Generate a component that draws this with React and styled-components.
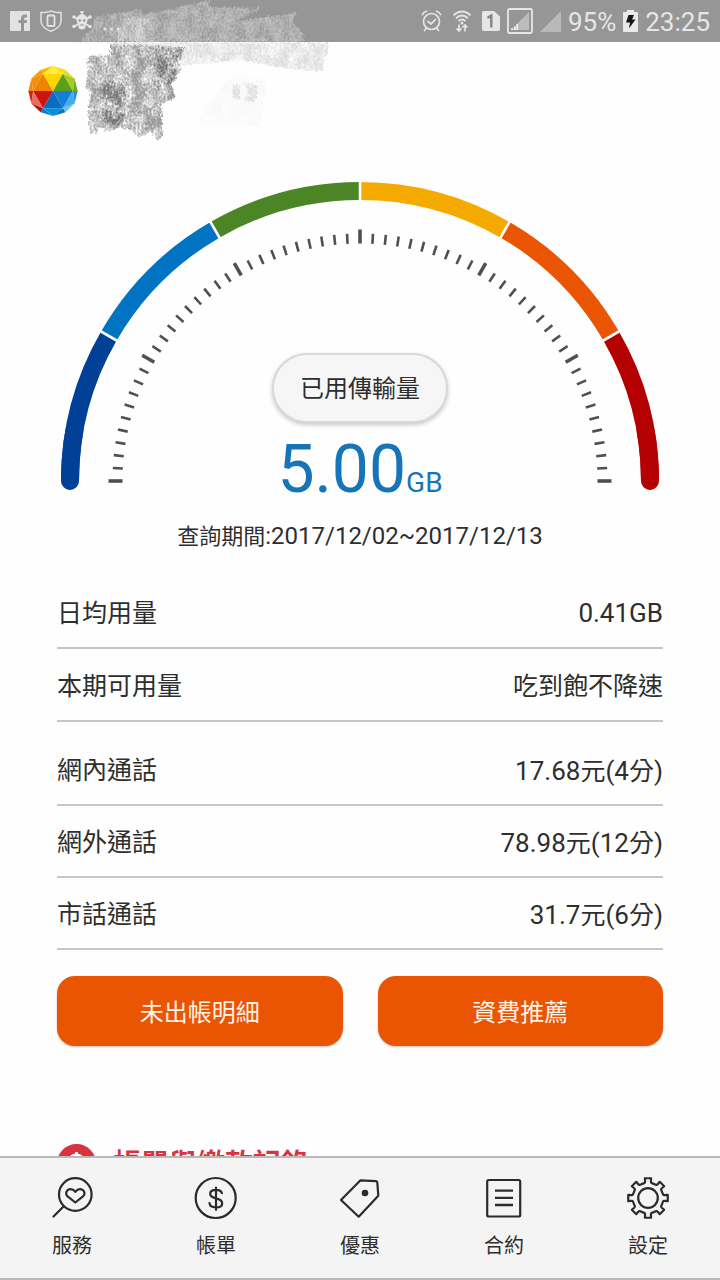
import React from "react";
import styled, { createGlobalStyle } from "styled-components";

const GlobalStyle = createGlobalStyle`
  *, *::before, *::after { box-sizing: border-box; }
  body {
    margin: 0;
    background: #fefefe;
    color: #2e2e2e;
    font-family: Roboto, "Noto Sans CJK TC", sans-serif;
  }
  button, a { font: inherit; color: inherit; }
`;

const Screen = styled.div`
  position: relative;
  display: flex;
  flex-direction: column;
  height: 100vh;
  overflow: hidden;
`;

const StatusBar = styled.div`
  flex: none;
  display: flex;
  align-items: center;
  justify-content: space-between;
  height: 42px;
  padding: 0 10px;
  background: #969696;
  color: #e6e6e6;
  font-size: 26px;
  line-height: 32px;
`;

const StatusGroup = styled.div`
  display: flex;
  align-items: center;
  gap: ${(p) => p.$gap}px;
`;

const Clock = styled.span`
  padding-top: 2px;
`;

const Scroller = styled.main`
  flex: 1;
  min-height: 0;
  overflow-y: auto;
  scrollbar-width: none;
`;

const Header = styled.header`
  display: flex;
  align-items: center;
  height: 98px;
  padding: 0 28px;
`;

const Content = styled.div`
  padding: 38px 57px 0;
`;

const GaugeFrame = styled.section`
  display: grid;
  justify-items: center;
  align-items: start;
  > * { grid-area: 1 / 1; }
`;

const GaugeSvg = styled.svg`
  display: block;
  width: 100%;
  max-width: 606px;
`;

const Reading = styled.div`
  display: flex;
  flex-direction: column;
  align-items: center;
  padding-top: 175px;
`;

const Pill = styled.button`
  height: 70px;
  padding: 2px 26px 0;
  border: 2px solid #d9d9d9;
  border-radius: 35px;
  background: #f6f6f6;
  box-shadow: 0 2px 4px rgba(0, 0, 0, 0.22);
  font-size: 24px;
  line-height: 36px;
`;

const Amount = styled.p`
  margin: 9px 0 0;
  color: #1674b8;
  font-size: 66px;
  line-height: 76px;
`;

const Unit = styled.span`
  font-size: 28px;
`;

const Period = styled.p`
  margin: 0;
  text-align: center;
  font-size: 22px;
  line-height: 30px;
`;

const Latin = styled.span`
  font-size: ${(p) => p.$size}px;
`;

const List = styled.dl`
  margin: ${(p) => p.$top}px 0 0;
`;

const Row = styled.div`
  display: flex;
  align-items: center;
  justify-content: space-between;
  height: ${(p) => p.$height}px;
  padding-top: 4px;
  border-bottom: 2px solid #c6c6c8;
  font-size: 25px;
  line-height: 36px;
  dd { margin: 0; }
`;

const Actions = styled.div`
  display: grid;
  grid-template-columns: 1fr 1fr;
  gap: 35px;
  margin-top: 26px;
`;

const ActionButton = styled.button`
  height: 70px;
  padding: 4px 0 0;
  border: 0;
  border-radius: 18px;
  background: #ea5504;
  box-shadow: 0 1px 2px rgba(0, 0, 0, 0.25);
  && { color: #fff3e6; }
  font-size: 24px;
  line-height: 36px;
`;

const SectionTitle = styled.h2`
  display: flex;
  align-items: center;
  gap: 17px;
  margin: 95px 0 24px;
  color: #d9333f;
  font-size: 28px;
  line-height: 40px;
`;

const TitleText = styled.span`
  padding-top: 4px;
`;

const NavBar = styled.nav`
  flex: none;
  display: grid;
  grid-template-columns: repeat(5, 1fr);
  height: 124px;
  border-top: 2px solid #b9b9b9;
  border-bottom: 2px solid #b9b9b9;
  background: #f4f4f4;
`;

const NavLink = styled.a`
  display: flex;
  flex-direction: column;
  align-items: center;
  gap: 11px;
  padding-top: 18px;
  text-decoration: none;
  font-size: 20px;
  line-height: 30px;
`;

const NavSvg = styled.svg`
  display: block;
  width: 44px;
  height: 44px;
  fill: none;
  stroke: #2b2b2b;
  stroke-width: 2.2;
  stroke-linecap: round;
  stroke-linejoin: round;
`;

const ScribbleSvg = styled.svg`
  position: absolute;
  top: 0;
  left: 0;
  width: 340px;
  height: 150px;
  pointer-events: none;
`;

const polar = (r, deg, cx = 303, cy = 303) => {
  const a = (deg * Math.PI) / 180;
  return [cx - r * Math.cos(a), cy - r * Math.sin(a)];
};

const SEGMENTS = ["#004097", "#0074c2", "#4b8526", "#f5aa00", "#ea5504", "#b40000"];

function arc(from, to) {
  const [x1, y1] = polar(290, from);
  const [x2, y2] = polar(290, to);
  return `M${x1} ${y1}A290 290 0 0 1 ${x2} ${y2}`;
}

function Gauge() {
  return (
    <GaugeSvg viewBox="0 0 606 313" aria-hidden="true">
      <g fill="none" strokeWidth="18">
        <path d={arc(0, 10)} stroke={SEGMENTS[0]} strokeLinecap="round" />
        <path d={arc(170, 180)} stroke={SEGMENTS[5]} strokeLinecap="round" />
        {SEGMENTS.map((color, i) => (
          <path key={color} d={arc(i * 30, i * 30 + 30)} stroke={color} />
        ))}
      </g>
      {[30, 60, 90, 120, 150].map((deg) => {
        const [x1, y1] = polar(278, deg);
        const [x2, y2] = polar(302, deg);
        return <line key={deg} x1={x1} y1={y1} x2={x2} y2={y2} stroke="#fff" strokeWidth="2.6" />;
      })}
      {Array.from({ length: 61 }, (_, i) => {
        const major = i % 10 === 0;
        const [x1, y1] = polar(237.5, i * 3);
        const [x2, y2] = polar(major ? 251.5 : 247.5, i * 3);
        return (
          <line key={i} x1={x1} y1={y1} x2={x2} y2={y2} stroke="#505050" strokeWidth={major ? 3.6 : 2.6} />
        );
      })}
    </GaugeSvg>
  );
}

function Logo() {
  const ring = (r, offset) =>
    Array.from({ length: 6 }, (_, i) => polar(r, i * 60 + offset, 74, 74));
  const inner = ring(59, 0);
  const mid = ring(74, 30);
  const outer = ring(73, 0);
  const facets = ["#f08200", "#ffd500", "#58a01c", "#1480d2", "#0a6cc0", "#cc130d"];
  const caps = ["#f28e10", "#ffec3c", "#a4cc22", "#45abea", "#0090dc", "#e8705a"];
  const rimA = ["#f08a14", "#f8b800", "#e4dc20", "#2a90d8", "#0a70c4", "#a81410"];
  const rimB = ["#f5a000", "#ffdd00", "#6cae1c", "#6cc0f0", "#0a80d0", "#d22018"];
  const pts = (...a) => a.map((p) => p.join(",")).join(" ");
  return (
    <svg width="50" height="50" viewBox="0 0 148 148" role="img" aria-label="logo">
      {inner.map((p, i) => {
        const n = (i + 1) % 6;
        return (
          <g key={i}>
            <polygon points={pts([74, 74], p, inner[n])} fill={facets[i]} />
            <polygon points={pts(p, mid[i], inner[n])} fill={caps[i]} />
            <polygon points={pts(p, outer[i], mid[i])} fill={rimA[i]} />
            <polygon points={pts(inner[n], outer[n], mid[i])} fill={rimB[i]} />
          </g>
        );
      })}
    </svg>
  );
}

function Scribble() {
  return (
    <ScribbleSvg viewBox="0 0 340 150" aria-hidden="true">
      <defs>
        <filter id="grain" x="-5%" y="-5%" width="110%" height="110%">
          <feTurbulence type="fractalNoise" baseFrequency="0.5 0.36" numOctaves="2" seed="4" result="n" />
          <feTurbulence type="fractalNoise" baseFrequency="0.09 0.07" numOctaves="2" seed="9" result="big" />
          <feComposite in="n" in2="big" operator="arithmetic" k2="0.6" k3="0.5" result="mix" />
          <feColorMatrix in="mix" type="matrix" values="0 0 0 0 0  0 0 0 0 0  0 0 0 0 0  0 0 0 2.6 -0.8" result="m" />
          <feDisplacementMap in="SourceGraphic" in2="n" scale="6" xChannelSelector="R" yChannelSelector="G" result="d" />
          <feComposite in="d" in2="m" operator="in" />
        </filter>
      </defs>
      <g filter="url(#grain)">
        <path d="M96 17 142 9 142 15 211 0 208 7 262 8 236 21 297 13 292 22 303 33 304 42 80 42 92 28z" fill="#d0d0d0" opacity="0.7" />
        <path d="M118 18H154V42H118z" fill="#e2e2e2" opacity="0.6" />
        <path d="M110 43 328 43 329 53 324 58 323 71 290 69 240 60 181 66 110 60z" fill="#c8c8c8" opacity="0.6" />
        <path d="M88 56 110 55 110 44 184 47 183 57 178 62 182 70 174 76 171 85 176 98 161 104 163 136 157 141 151 131 139 138 132 130 120 127 108 132 100 127 97 132 90 134 88 110 91 92 86 88z" fill="#999" />
        <path d="M102 84 120 80 128 96 122 126 104 122zM153 48 183 49 177 64 176 80 158 90z" fill="#5c5c5c" opacity="0.6" />
        <path d="M243 82 256 84 258 94 254 102 244 101 248 92zM232 86 240 83 240 100 233 99z" fill="#bdbdbd" opacity="0.55" />
        <path d="M196 122 228 78 262 78 266 88 260 126z" fill="#d8d8d8" opacity="0.16" />
      </g>
    </ScribbleSvg>
  );
}

const StatusLeft = () => (
  <StatusGroup $gap={10}>
    <svg width="20" height="20" viewBox="0 0 20 20">
      <rect width="20" height="20" rx="1" fill="#e2e2e2" />
      <path d="M11 20V12H8.500V9H11V7.500Q11 3.500 14.800 3.500H17V6.500H15.300Q14 6.500 14 8V9H17L16.600 12H14V20z" fill="#969696" />
    </svg>
    <svg width="22" height="22" viewBox="0 0 22 22" fill="none" stroke="#e2e2e2">
      <path d="M1 2.500H5Q9 2 11 .8 13 2 17 2.500H21V12Q20 18 11 21.300 2 18 1 12z" strokeWidth="1.500" />
      <rect x="7.500" y="5.500" width="7" height="10.500" rx="1" strokeWidth="1.800" />
    </svg>
    <svg width="20" height="20" viewBox="0 0 20 20" fill="#e6e6e6" stroke="#e6e6e6">
      <path d="M3 6.500 17 15M17 6.500 3 15" strokeWidth="2" strokeLinecap="round" />
      <circle cx="2" cy="6" r="1.800" stroke="none" /><circle cx="18" cy="6" r="1.800" stroke="none" />
      <circle cx="2" cy="15.500" r="1.800" stroke="none" /><circle cx="18" cy="15.500" r="1.800" stroke="none" />
      <path d="M10 .5V4M8 1H12" strokeWidth="1.500" />
      <path d="M10 3Q15.500 4 15.500 9 15.500 12 13.500 13V17Q10 20 6.500 17V13Q4.500 12 4.500 9 4.500 4 10 3z" stroke="none" />
      <circle cx="7.800" cy="9.500" r="1.300" fill="#969696" stroke="none" /><circle cx="12.200" cy="9.500" r="1.300" fill="#969696" stroke="none" />
      <path d="M8 14H12" stroke="#969696" />
    </svg>
    <svg width="18" height="20" viewBox="0 0 18 20" fill="#f0f0f0">
      <circle cx="3" cy="18" r="1.600" /><circle cx="9.500" cy="18" r="1.600" /><circle cx="16" cy="18" r="1.600" />
    </svg>
  </StatusGroup>
);

const StatusRight = () => (
  <StatusGroup $gap={7}>
    <svg width="21" height="22" viewBox="0 0 21 22" fill="none" stroke="#e6e6e6" strokeWidth="1.700" strokeLinecap="round">
      <circle cx="10.500" cy="11.500" r="8" />
      <path d="M7 11.500 10 14 14.500 9.500M1.500 4.500Q2.500 2 5.500 1.200M19.500 4.500Q18.500 2 15.500 1.200M5 18.500 3.500 20.500M16 18.500 17.500 20.500" />
    </svg>
    <svg width="26" height="24" viewBox="-2 0 26 24" fill="none" stroke="#e6e6e6" strokeWidth="1.900">
      <path d="M2.500 6.200Q11-1 19.500 6.200M5 9.200Q11 4 17 9.200M7.500 12Q11 9 14.500 12" />
      <circle cx="11" cy="14" r="1.500" fill="#e6e6e6" stroke="none" />
      <path d="M8 15.500V22M5.500 19.500 8 22 10.500 19.500M14 22.500V16M11.500 18.500 14 16 16.500 18.500" strokeWidth="1.700" />
    </svg>
    <svg width="18" height="20" viewBox="0 0 18 20">
      <path d="M2 0H12L18 5.500V18Q18 20 16 20H2Q0 20 0 18V2Q0 0 2 0z" fill="#e6e6e6" />
      <path d="M5.500 7 9.300 4.500V16.500" fill="none" stroke="#858585" strokeWidth="2.400" />
    </svg>
    <svg width="26" height="26" viewBox="0 0 26 26">
      <rect x="1" y="1" width="24" height="24" rx="1.500" fill="none" stroke="#e6e6e6" strokeWidth="1.800" />
      <path d="M4 22 22 4V22z" fill="#bcbcbc" />
      <path d="M4 22V20.500H6V22zM7 22V18.500H8.600V22zM9.500 22V16H11V22z" fill="#f4f4f4" />
    </svg>
    <svg width="21" height="22" viewBox="0 0 21 22"><path d="M0 22 21 1V22z" fill="#b9b9b9" /></svg>
    <Clock>95%</Clock>
    <svg width="15" height="22" viewBox="0 0 15 22">
      <path d="M4 0H11V2H14Q15 2 15 3V21Q15 22 14 22H1Q0 22 0 21V3Q0 2 1 2H4z" fill="#e9e9e9" />
      <path d="M5.500 5H11L9 9.500H12.500L6 18.500 7 12.500H3z" fill="#151515" />
    </svg>
    <Clock>23:25</Clock>
  </StatusGroup>
);

function gearPath() {
  const out = [];
  for (let i = 0; i < 8; i++) {
    [[15.5, -12.5], [16.5, -10], [20, -9], [20, 9], [16.5, 10], [15.5, 12.5]].forEach(([r, d]) => {
      out.push(polar(r, i * 45 + d, 22, 22).join(" "));
    });
  }
  return `M${out.join("L")}z`;
}

const NAV = [
  {
    label: "服務",
    icon: (
      <>
        <circle cx="25.300" cy="18.500" r="16.300" />
        <path d="M13.500 30.500 3.500 40.500M25.300 26.500 17.300 20.200Q15 17 17.300 14.400 21.500 11.400 25.300 15.800 29 11.400 33.300 14.400 35.700 17 33.300 20.200z" />
      </>
    ),
  },
  {
    label: "帳單",
    icon: (
      <>
        <circle cx="21.700" cy="22" r="20" />
        <path d="M28 17.200Q27 13.800 22 13.800 16.200 13.800 16.200 17.800 16.200 21 22 22.400 28.200 23.800 28.200 27.400 28.200 31.400 22 31.400 16 31.400 15.500 27.200M22 11.500V33.800" />
      </>
    ),
  },
  {
    label: "優惠",
    icon: (
      <>
        <path d="M3 24 22.500 4.300 38 5.200Q39.200 5.300 39.300 6.500L40.300 19.700 20.700 40.700z" />
        <circle cx="27" cy="17" r="3.300" fill="#2b2b2b" stroke="none" />
      </>
    ),
  },
  {
    label: "合約",
    icon: (
      <>
        <rect x="5.200" y="4" width="33" height="36.500" rx="1.500" />
        <path d="M13 14.700H31M13 21.800H31M13 29H31" strokeWidth="2.300" strokeLinecap="butt" />
      </>
    ),
  },
  {
    label: "設定",
    icon: (
      <>
        <path d={gearPath()} />
        <circle cx="22" cy="22" r="9.800" />
      </>
    ),
  },
];

const USAGE = [
  ["日均用量", "0.41GB"],
  ["本期可用量", "吃到飽不降速"],
];

const CALLS = [
  ["網內通話", "17.68元(4分)"],
  ["網外通話", "78.98元(12分)"],
  ["市話通話", "31.7元(6分)"],
];

const Mixed = ({ text, size }) =>
  text
    .split(/([\x20-\x7e]+)/)
    .filter(Boolean)
    .map((part, i) =>
      /^[\x20-\x7e]/.test(part) ? (
        <Latin key={i} $size={size}>{part}</Latin>
      ) : (
        <React.Fragment key={i}>{part}</React.Fragment>
      )
    );

const Rows = ({ items, top, height }) => (
  <List $top={top}>
    {items.map(([name, value]) => (
      <Row key={name} $height={height}>
        <dt>{name}</dt>
        <dd><Mixed text={value} size={26} /></dd>
      </Row>
    ))}
  </List>
);

export default function App() {
  return (
    <Screen>
      <GlobalStyle />
      <StatusBar>
        <StatusLeft />
        <StatusRight />
      </StatusBar>
      <Scroller>
        <Header>
          <Logo />
        </Header>
        <Content>
          <GaugeFrame>
            <Gauge />
            <Reading>
              <Pill type="button">已用傳輸量</Pill>
              <Amount>
                5.00<Unit>GB</Unit>
              </Amount>
              <Period><Mixed text="查詢期間:2017/12/02~2017/12/13" size={24} /></Period>
            </Reading>
          </GaugeFrame>
          <Rows items={USAGE} top={24} height={73} />
          <Rows items={CALLS} top={12} height={72} />
          <Actions>
            <ActionButton type="button">未出帳明細</ActionButton>
            <ActionButton type="button">資費推薦</ActionButton>
          </Actions>
          <SectionTitle>
            <svg width="39" height="39" viewBox="0 0 39 39" aria-hidden="true">
              <circle cx="19.500" cy="19.500" r="19.500" fill="#d9333f" />
              <path d="M25 13.500Q23.500 11 19.500 11 14 11 14 15 14 18.500 19.500 19.500 25.500 20.500 25.500 24.500 25.500 28.500 19.500 28.500 14.500 28.500 13.500 25M19.500 8V31.500" fill="none" stroke="#fff" strokeWidth="3" />
            </svg>
            <TitleText>帳單與繳款記錄</TitleText>
          </SectionTitle>
        </Content>
      </Scroller>
      <NavBar>
        {NAV.map(({ label, icon }) => (
          <NavLink key={label} href="#">
            <NavSvg viewBox="0 0 44 44" aria-hidden="true">{icon}</NavSvg>
            {label}
          </NavLink>
        ))}
      </NavBar>
      <Scribble />
    </Screen>
  );
}
